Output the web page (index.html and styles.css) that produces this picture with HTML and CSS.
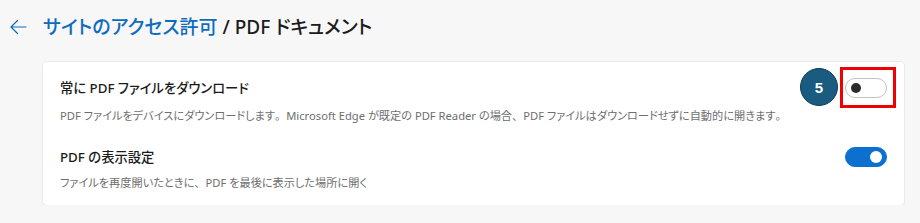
FILE: index.html
```html
<!DOCTYPE html>
<html lang="ja">
<head>
<meta charset="utf-8">
<link rel="stylesheet" href="styles.css">
</head>
<body>
<header class="page-head">
  <svg class="back" width="17" height="16" viewBox="0 0 17 16" aria-hidden="true">
    <path d="M16 8H1.5M7.5 1.5L1 8l6.5 6.5" fill="none" stroke="#0f6cbd" stroke-width="1.2" stroke-linecap="round" stroke-linejoin="round"/>
  </svg>
  <h1 class="crumb"><span class="crumb-link">サイトのアクセス許可</span> / PDF ドキュメント</h1>
</header>
<section class="card">
  <div class="row row-first">
    <div class="row-head">
      <div class="row-title">常に PDF ファイルをダウンロード</div>
      <div class="toggle-wrap">
        <span class="badge">5</span>
        <span class="highlight"></span>
        <span class="toggle"><span class="knob"></span></span>
      </div>
    </div>
    <div class="row-desc desc-first">PDF ファイルをデバイスにダウンロードします<span class="fw">。</span>Microsoft Edge が既定の PDF Reader の場合<span class="fw">、</span>PDF ファイルはダウンロードせずに自動的に開きます<span class="fw">。</span></div>
  </div>
  <div class="row row-second">
    <div class="row-head">
      <div class="row-title">PDF の表示設定</div>
      <div class="toggle-wrap">
        <span class="toggle on"><span class="knob"></span></span>
      </div>
    </div>
    <div class="row-desc">ファイルを再度開いたときに<span class="fw">、</span>PDF を最後に表示した場所に開く</div>
  </div>
</section>
</body>
</html>
```

FILE: styles.css
```css
html, body {
  margin: 0;
  padding: 0;
  background: #f7f7f7;
  font-family: "Noto Sans", "Noto Sans CJK JP", sans-serif;
  font-feature-settings: "palt";
  color: #1b1b1b;
}

.fw {
  font-feature-settings: normal;
}

.page-head {
  display: flex;
  align-items: center;
  gap: 16px;
  padding: 13px 0 0 10px;
  height: 28px;
}

.back {
  display: block;
}

.crumb {
  margin: 0;
  font-size: 19px;
  line-height: 28px;
  font-weight: 500;
  color: #1b1b1b;
}

.crumb-link {
  color: #0f6cbd;
}

.card {
  margin: 21px 0 0 43px;
  width: 861px;
  box-sizing: border-box;
  background: #ffffff;
  border-radius: 4px;
  box-shadow: 0 0 0 1px #ebebeb, 0 1px 2px rgba(0, 0, 0, 0.12);
  padding: 0 17px 14px 17px;
}

.row-first {
  padding-top: 15px;
}

.row-second {
  padding-top: 22px;
}

.row-head {
  display: flex;
  align-items: center;
  justify-content: space-between;
  min-height: 22px;
}

.row-title {
  font-size: 13.3px;
  line-height: 20px;
  font-weight: 500;
  color: #1b1b1b;
}

.row-desc {
  margin-top: 7px;
  font-size: 11.2px;
  line-height: 16px;
  color: #6e6e6e;
}

.desc-first {
  margin-top: 9px;
}

.toggle-wrap {
  position: relative;
  display: flex;
}

.toggle {
  display: block;
  position: relative;
  width: 42px;
  height: 20px;
  box-sizing: border-box;
  border: 1px solid #c2c2c2;
  border-radius: 10px;
  background: #ffffff;
}

.toggle .knob {
  position: absolute;
  top: 4px;
  left: 5px;
  width: 10px;
  height: 10px;
  border-radius: 50%;
  background: #2b2b2b;
}

.toggle.on {
  background: #0c70d0;
  border-color: #0c70d0;
}

.toggle.on .knob {
  left: auto;
  right: 4px;
  top: 3px;
  width: 12px;
  height: 12px;
  background: #ffffff;
}

.highlight {
  position: absolute;
  left: -5px;
  top: -11px;
  width: 56px;
  height: 41px;
  box-sizing: border-box;
  border: 3px solid #ee0000;
}

.badge {
  position: absolute;
  left: -45px;
  top: -10px;
  width: 38px;
  height: 38px;
  box-sizing: border-box;
  border-radius: 50%;
  background: #1a5b80;
  border: 1px solid #0e3b56;
  color: #ffffff;
  font-family: "Liberation Sans", "Noto Sans", sans-serif;
  font-weight: 700;
  font-size: 15px;
  display: flex;
  align-items: center;
  justify-content: center;
}
```
